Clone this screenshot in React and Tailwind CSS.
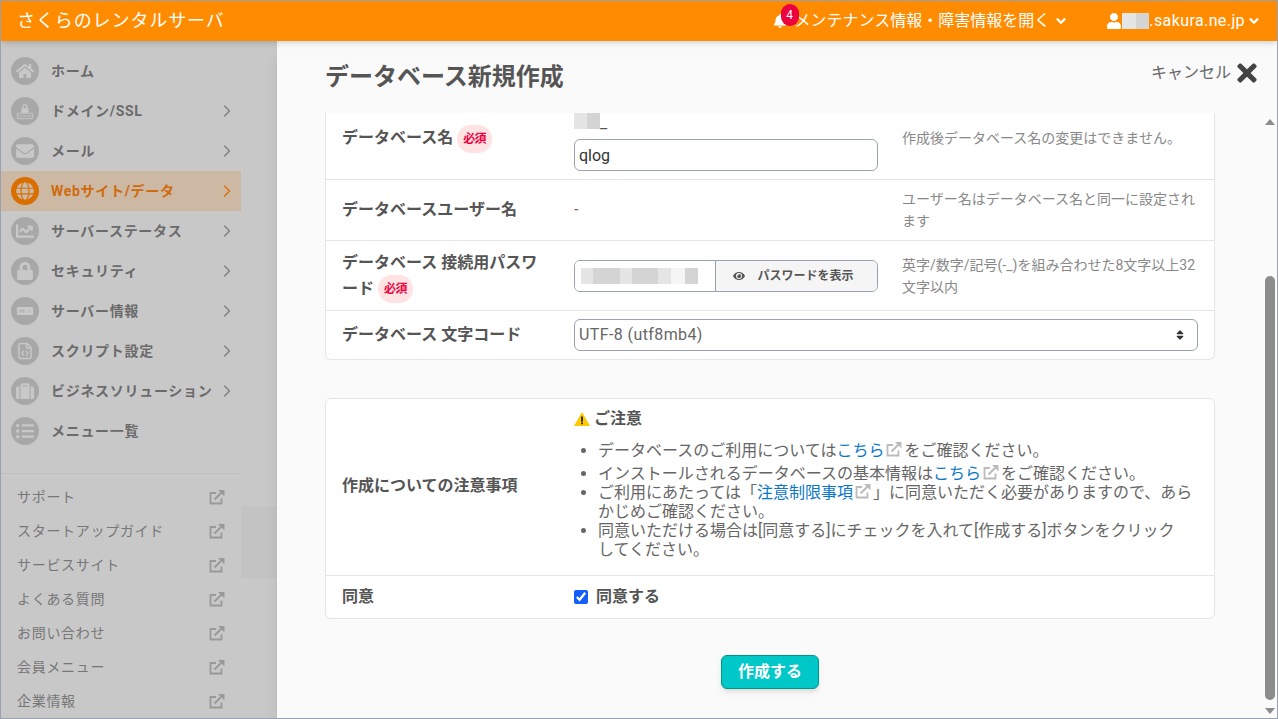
import { ChevronRight, ChevronDown, FileCode } from 'lucide-react';
import {
  FaHome, FaEnvelope, FaGlobe, FaChartLine, FaLock, FaSuitcase, FaListUl, FaBell, FaUser,
  FaTimes, FaEye, FaSort,
} from 'react-icons/fa';

function DomainIcon({ className }) {
  return (
    <svg viewBox="0 0 20 20" className={className} fill="currentColor">
      <path d="M7 8V5.500a3 3 0 0 1 6 0V8h-1.500V5.500a1.500 1.500 0 0 0-3 0V8z" />
      <rect x="6" y="7" width="8" height="5" rx="0.5" />
      <rect x="1.500" y="12.500" width="17" height="6" rx="0.5" fill="none" stroke="currentColor" />
      <path d="M3 14.500l1 2 1-2 1 2 1-2M8 14.500l1 2 1-2 1 2 1-2M13 14.500l1 2 1-2 1 2 1-2" fill="none" stroke="currentColor" strokeWidth="0.6" />
    </svg>
  );
}

function ServerIcon({ className }) {
  return (
    <svg viewBox="0 0 20 20" className={className}>
      <rect x="1" y="5.500" width="18" height="9" rx="1" fill="currentColor" />
      <path d="M4.500 8.500v3M6.500 8.500v3M8.500 8.500v3M14 10h2" stroke="#a8a8a8" strokeWidth="1" />
    </svg>
  );
}

function ExtIcon({ className }) {
  return (
    <svg viewBox="0 0 16 16" className={className} fill="none" stroke="currentColor">
      <path d="M12.500 9.500V14.500H1.500V4H7" strokeWidth="1.800" />
      <path d="M5.500 10.500L12.500 3.500" strokeWidth="2" />
      <path d="M9 1h6.500v6.500z" fill="currentColor" stroke="none" />
    </svg>
  );
}

function WarnIcon() {
  return (
    <svg viewBox="0 0 16 15" className="h-4 w-4">
      <path d="M8 0.500L16 14.500H0z" fill="#ffc800" />
      <path d="M7.100 5h1.800v5.200H7.100zM7.100 11h1.800v1.800H7.100z" fill="#222" />
    </svg>
  );
}

const navItems = [
  { label: 'ホーム', icon: FaHome },
  { label: 'ドメイン/SSL', icon: DomainIcon, arrow: true },
  { label: 'メール', icon: FaEnvelope, arrow: true },
  { label: 'Webサイト/データ', icon: FaGlobe, arrow: true, active: true },
  { label: 'サーバーステータス', icon: FaChartLine, arrow: true },
  { label: 'セキュリティ', icon: FaLock, arrow: true },
  { label: 'サーバー情報', icon: ServerIcon, arrow: true },
  { label: 'スクリプト設定', icon: FileCode, arrow: true },
  { label: 'ビジネスソリューション', icon: FaSuitcase, arrow: true },
  { label: 'メニュー一覧', icon: FaListUl },
];

const subLinks = ['サポート', 'スタートアップガイド', 'サービスサイト', 'よくある質問', 'お問い合わせ', '会員メニュー', '企業情報'];

function Required() {
  return (
    <span className="-my-1 inline-flex h-7 items-center rounded-full bg-red-100 px-1.5 align-middle text-xs font-bold tracking-tighter text-rose-600">
      必須
    </span>
  );
}

function Masked({ widths, className }) {
  return (
    <span className={`flex ${className}`}>
      {widths.map(([w, color], i) => (
        <span key={i} className={color} style={{ width: w }} />
      ))}
    </span>
  );
}

function Ext() {
  return <ExtIcon className="mx-0.5 inline h-4 w-4 align-text-top text-[#bbb]" />;
}

function NavRow({ item }) {
  const Icon = item.icon;
  return (
    <div className={`flex h-10 items-center pl-2.5 pr-1 ${item.active ? 'bg-[#cdb8a4] text-[#d06a0a]' : 'text-[#6b6b6b]'}`}>
      <span className={`flex h-7 w-7 shrink-0 items-center justify-center rounded-full ${item.active ? 'bg-[#d96f00] text-[#cdb8a4]' : 'bg-[#a8a8a8] text-[#c8c8c8]'}`}>
        <Icon className="h-4.5 w-4.5" />
      </span>
      <span className="ml-3 flex-1 whitespace-nowrap text-sm font-bold tracking-wider">{item.label}</span>
      {item.arrow && <ChevronRight className={`h-5 w-5 shrink-0 ${item.active ? 'text-[#d96f00]' : 'text-[#7d7d7d]'}`} strokeWidth={1.5} />}
    </div>
  );
}

export default function App() {
  return (
    <div className="flex h-screen flex-col overflow-hidden border border-gray-400 bg-neutral-50 font-['Roboto','Noto_Sans_CJK_JP',sans-serif] text-[#555]">
      <header className="relative z-10 flex h-10 shrink-0 items-center bg-[#ff8c00] pl-4 pr-4 text-white shadow-md">
        <h1 className="text-lg tracking-wider">さくらのレンタルサーバ</h1>
        <div className="ml-auto flex items-center">
          <span className="relative mr-2 w-3.5">
            <FaBell className="h-3.5 w-3.5" />
            <span className="absolute -top-2.5 left-2 flex h-5.5 w-4.5 items-center justify-center rounded-full bg-rose-600 text-xs">4</span>
          </span>
          <span className="text-base">メンテナンス情報・障害情報を開く</span>
          <ChevronDown className="ml-1 h-3.5 w-3.5" strokeWidth={4} />
          <FaUser className="ml-9.5 h-4 w-4" />
          <Masked className="h-4" widths={[[14, 'bg-neutral-200'], [13, 'bg-neutral-300']]} />
          <span className="text-base tracking-wide">.sakura.ne.jp</span>
          <ChevronDown className="ml-0.5 h-3.5 w-3.5" strokeWidth={4} />
        </div>
      </header>

      <div className="flex min-h-0 flex-1">
        <aside className="flex w-69 shrink-0 bg-[#c8c8c8]">
          <div className="flex w-60 flex-col pt-2.5">
            <nav className="mb-5.5">
              {navItems.map((item) => (
                <NavRow key={item.label} item={item} />
              ))}
            </nav>
            <div className="flex flex-1 flex-col border-t border-[#bdbdbd] pt-1.5">
              {subLinks.map((label) => (
                <div key={label} className="flex flex-1 items-center justify-between pl-4 pr-4 text-sm tracking-wider text-[#777]">
                  {label}
                  <ExtIcon className="h-4 w-4 text-[#999]" />
                </div>
              ))}
            </div>
          </div>
          <div className="flex flex-1 flex-col">
            <div className="mb-35 mt-auto h-18 bg-[#c3c3c3]" />
          </div>
        </aside>

        <main className="relative flex min-w-0 flex-1 flex-col shadow-lg">
          <div className="flex h-18 shrink-0 items-center justify-between pl-12 pr-4">
            <h2 className="text-2xl font-bold">データベース新規作成</h2>
            <div className="mb-2 flex items-center gap-0.5 text-base text-[#666]">
              キャンセル
              <FaTimes className="h-7 w-7 text-[#444]" />
            </div>
          </div>

          <div className="flex min-h-0 flex-1">
            <div className="min-w-0 flex-1 overflow-hidden pl-12 pr-12">
              <section className="rounded-b-md border border-t-0 border-neutral-200 bg-white">
                <div className="flex gap-6 border-b border-neutral-200 pb-2 pl-4 pr-4">
                  <div className="mt-3 w-52 shrink-0 text-base font-bold leading-relaxed">
                    データベース名 <Required />
                  </div>
                  <div className="w-76 shrink-0">
                    <div className="mb-0.5 flex h-6 items-start">
                      <Masked className="h-4" widths={[[13, 'bg-neutral-200'], [13, 'bg-neutral-300']]} />
                      <span className="text-base leading-5">_</span>
                    </div>
                    <input
                      defaultValue="qlog"
                      className="h-8 w-full rounded-md border border-gray-400 bg-white px-1 text-base text-[#333] outline-none"
                    />
                  </div>
                  <p className="mt-3.5 flex-1 text-sm leading-5.5 text-[#888]">作成後データベース名の変更はできません。</p>
                </div>

                <div className="flex items-center gap-6 border-b border-neutral-200 py-2 pl-4 pr-4">
                  <div className="w-52 shrink-0 text-base font-bold">データベースユーザー名</div>
                  <div className="w-76 shrink-0 text-base text-[#666]">-</div>
                  <p className="flex-1 text-sm leading-5.5 text-[#888]">ユーザー名はデータベース名と同一に設定されます</p>
                </div>

                <div className="flex h-17.5 items-center gap-6 border-b border-neutral-200 pl-4 pr-4">
                  <div className="w-52 shrink-0 text-base font-bold leading-relaxed">
                    データベース 接続用パスワード <Required />
                  </div>
                  <div className="flex h-8 w-76 shrink-0 overflow-hidden rounded-md border border-gray-400">
                    <div className="flex w-35 items-center bg-white px-1.5">
                      <Masked
                        className="h-4"
                        widths={[[12, 'bg-neutral-200'], [27, 'bg-neutral-300'], [12, 'bg-neutral-200'], [13, 'bg-neutral-300'], [13, 'bg-neutral-300'], [13, 'bg-neutral-200'], [14, 'bg-neutral-100'], [13, 'bg-neutral-300']]}
                      />
                    </div>
                    <div className="flex flex-1 items-center justify-center gap-3 border-l border-gray-400 bg-neutral-100 pr-1.5 text-xs font-bold">
                      <FaEye className="h-3 w-3" />
                      パスワードを表示
                    </div>
                  </div>
                  <p className="flex-1 text-sm leading-5.5 text-[#888]">英字/数字/記号(-_)を組み合わせた8文字以上32文字以内</p>
                </div>

                <div className="flex items-center gap-6 py-2 pl-4 pr-4">
                  <div className="w-52 shrink-0 text-base font-bold">データベース 文字コード</div>
                  <div className="relative flex-1">
                    <select className="h-8 w-full appearance-none rounded-md border border-gray-400 bg-white px-1 text-base tracking-wide text-[#666] outline-none">
                      <option>UTF-8 (utf8mb4)</option>
                    </select>
                    <FaSort className="pointer-events-none absolute right-3 top-2.5 h-3 w-3 text-[#333]" />
                  </div>
                </div>
              </section>

              <section className="mt-9.5 rounded-md border border-neutral-200 bg-white">
                <div className="flex items-center gap-6 border-b border-neutral-200 pb-4 pl-4 pr-4 pt-2">
                  <div className="w-52 shrink-0 pt-1.5 text-base font-bold">作成についての注意事項</div>
                  <div className="min-w-0 flex-1">
                    <div className="flex items-center gap-1 text-base font-bold">
                      <WarnIcon />
                      ご注意
                    </div>
                    <ul className="mt-2.5 list-disc pl-6 text-base leading-[19px] text-[#666]">
                      <li className="mb-1">
                        データベースのご利用については<a className="text-[#0a78c8]">こちら</a><Ext />をご確認ください。
                      </li>
                      <li>
                        インストールされるデータベースの基本情報は<a className="text-[#0a78c8]">こちら</a><Ext />をご確認ください。
                      </li>
                      <li>
                        ご利用にあたっては「<a className="text-[#0a78c8]">注意制限事項</a><Ext />」に同意いただく必要がありますので、あらかじめご確認ください。
                      </li>
                      <li>同意いただける場合は[同意する]にチェックを入れて[作成する]ボタンをクリック<br />してください。</li>
                    </ul>
                  </div>
                </div>
                <div className="flex h-10.5 items-center gap-6 pl-4 pr-4">
                  <div className="w-52 shrink-0 text-base font-bold">同意</div>
                  <label className="flex items-center gap-2 text-base font-bold">
                    <input type="checkbox" defaultChecked className="h-3.5 w-3.5 accent-blue-600" />
                    同意する
                  </label>
                </div>
              </section>

              <div className="mt-9 flex justify-center">
                <button className="h-8.5 rounded-md border border-teal-600 bg-[#00c8c8] px-4 text-base font-bold text-white shadow-md">
                  作成する
                </button>
              </div>
            </div>

            <div className="flex w-3.5 shrink-0 flex-col items-end pb-1 pr-0.5 pt-1.5">
              <svg viewBox="0 0 10 6" className="h-1.5 w-2.5 fill-[#8c8c8c]"><path d="M5 0l5 6H0z" /></svg>
              <div className="mb-2 mt-auto h-106 w-2.5 rounded-full bg-[#8c8c8c]" />
              <svg viewBox="0 0 10 6" className="h-1.5 w-2.5 fill-[#8c8c8c]"><path d="M0 0h10L5 6z" /></svg>
            </div>
          </div>
        </main>
      </div>
    </div>
  );
}
